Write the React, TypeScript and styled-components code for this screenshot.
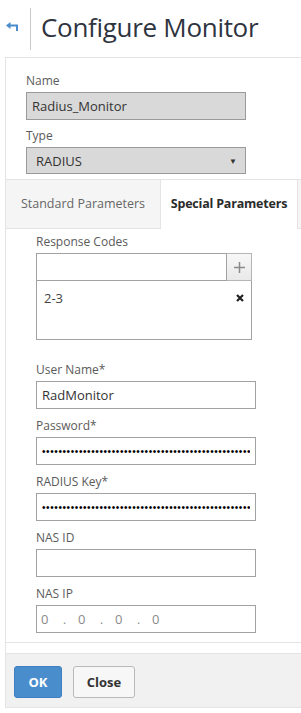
import styled, { createGlobalStyle } from 'styled-components';

const Global = createGlobalStyle`
  body { margin: 0; background: #fff; font-family: 'Open Sans', 'Noto Sans', sans-serif; color: #333; }
  * { box-sizing: border-box; }
`;

const Page = styled.div`width: 301px; height: 713px; overflow: hidden; background: #fff;`;

const Header = styled.header`
  display: flex; align-items: center; height: 57px; padding-left: 6px;
`;
const BackButton = styled.button`
  border: 0; background: none; padding: 0; width: 13px; height: 10px; display: flex; cursor: pointer;
  margin-top: -4px;
`;
const Divider = styled.div`width: 1px; height: 42px; background: #c8c8c8; margin: 0 10px 0 11px;`;
const Title = styled.h1`
  margin: 0; font-size: 26px; font-weight: 400; color: #2e3440; letter-spacing: -0.3px; margin-top: -4px;
`;

const Panel = styled.div`
  margin-left: 5px; border: 1px solid #e4e4e4; border-right: 0;
`;
const Top = styled.div`padding: 15px 0 5px 20px;`;
const Content = styled.div`padding: 5px 0 9px 30px; border-bottom: 1px solid #e4e4e4;`;

const Field = styled.div<{ $gap?: number }>`
  display: flex; flex-direction: column; margin-bottom: ${p => p.$gap ?? 9}px;
`;
const Label = styled.label`font-size: 12px; color: #5a5a5a; line-height: 16px; margin-bottom: 3px;`;

const TextBox = styled.input<{ $w?: number; $disabled?: boolean }>`
  width: ${p => p.$w ?? 220}px; height: 28px; border: 1px solid ${p => (p.$disabled ? '#9a9a9a' : '#a2a2a2')};
  background: ${p => (p.$disabled ? '#d9d9d9' : '#fff')};
  font-family: 'Open Sans', sans-serif; font-size: 13px; color: #333; padding: 0 5px; outline: none;
  border-radius: 0; display: block; margin: 0;
`;
const PassBox = styled(TextBox)`
  font-family: 'Liberation Sans', Arial, sans-serif; font-size: 10px; letter-spacing: 0.6px; color: #000;
`;

const Select = styled.div`
  width: 220px; height: 27px; border: 1px solid #9a9a9a; background: #d9d9d9;
  display: flex; align-items: center; justify-content: space-between; padding: 0 8px 0 9px;
  font-size: 13px; color: #333;
`;
const Caret = styled.span`font-size: 8px; color: #333;`;

const TabBar = styled.div`
  display: flex; height: 50px; background: #f5f5f5; border-top: 1px solid #e4e4e4;
  border-bottom: 1px solid #e4e4e4;
`;
const Tab = styled.div<{ $active?: boolean; $w: number }>`
  width: ${p => p.$w}px; display: flex; align-items: center; justify-content: center;
  font-size: 12.5px; font-weight: ${p => (p.$active ? 700 : 400)}; color: ${p => (p.$active ? '#2b2b2b' : '#666')};
  background: ${p => (p.$active ? '#fff' : 'transparent')};
  letter-spacing: ${p => (p.$active ? '-0.2px' : '0')};
  ${p => p.$active && 'border-left: 1px solid #e4e4e4; border-right: 1px solid #e4e4e4; margin-bottom: -1px;'}
  padding-bottom: 2px;
`;

const AddRow = styled.div`display: flex;`;
const PlusButton = styled.button`
  width: 25px; height: 28px; border: 1px solid #b5b5b5; border-left: 0;
  background: linear-gradient(#f7f7f7, #e9e9e9); display: flex; align-items: center; justify-content: center; padding: 0;
`;
const List = styled.div`
  width: 216px; height: 59px; border: 1px solid #a2a2a2; border-top: 0; padding: 8px 7px;
`;
const ListItem = styled.div`
  display: flex; justify-content: space-between; align-items: center; font-size: 13px; color: #444;
`;

const IpBox = styled.div`
  width: 220px; height: 28px; border: 1px solid #a2a2a2; display: flex; align-items: center; padding-left: 4px;
  font-size: 13px; color: #8a8a8a;
`;
const IpPart = styled.span`width: 22px;`;
const IpDot = styled.span`width: 15px; font-size: 12px;`;

const Footer = styled.div`
  margin-top: 10px; border-top: 1px solid #e4e4e4; background: #f1f1f1; height: 54px;
  display: flex; align-items: center; gap: 11px; padding-left: 8px; padding-top: 2px;
`;
const Button = styled.button<{ $primary?: boolean }>`
  height: 32px; padding: 0; border-radius: 3px;
  font-family: 'Open Sans', sans-serif; font-size: 13px; font-weight: 700;
  border: 1px solid ${p => (p.$primary ? '#3d7fc1' : '#b9b9b9')};
  background: ${p => (p.$primary ? '#4a8dcd' : '#f7f7f7')};
  color: ${p => (p.$primary ? '#fff' : '#333')};
  width: ${p => (p.$primary ? 48 : 62)}px;
`;

const dots = '•'.repeat(60);

export default function App() {
  return (
    <Page>
      <Global />
      <Header>
        <BackButton aria-label="Back">
          <svg width="13" height="10" viewBox="0 0 13 10">
            <path d="M4 3.5H11V9" fill="none" stroke="#4a8ccc" strokeWidth="2" />
            <path d="M0 3.5L4.5 0V7Z" fill="#4a8ccc" />
          </svg>
        </BackButton>
        <Divider />
        <Title>Configure Monitor</Title>
      </Header>
      <Panel>
        <Top>
          <Field $gap={8}>
            <Label>Name</Label>
            <TextBox $disabled readOnly value="Radius_Monitor" />
          </Field>
          <Field $gap={0}>
            <Label>Type</Label>
            <Select>
              RADIUS
              <Caret>▼</Caret>
            </Select>
          </Field>
        </Top>
        <TabBar>
          <Tab $w={154}>Standard Parameters</Tab>
          <Tab $w={138} $active>Special Parameters</Tab>
        </TabBar>
        <Content>
          <Field $gap={22}>
            <Label>Response Codes</Label>
            <AddRow>
              <TextBox $w={191} readOnly value="" />
              <PlusButton aria-label="Add">
                <svg width="11" height="11" viewBox="0 0 11 11">
                  <path d="M5.5 0V11M0 5.5H11" stroke="#8a8a8a" strokeWidth="1.5" />
                </svg>
              </PlusButton>
            </AddRow>
            <List>
              <ListItem>
                2-3
                <svg width="8" height="8" viewBox="0 0 8 8">
                  <path d="M1 1L7 7M7 1L1 7" stroke="#222" strokeWidth="2.2" />
                </svg>
              </ListItem>
            </List>
          </Field>
          <Field>
            <Label>User Name*</Label>
            <TextBox readOnly value="RadMonitor" />
          </Field>
          <Field>
            <Label>Password*</Label>
            <PassBox type="password" readOnly value={dots} />
          </Field>
          <Field>
            <Label>RADIUS Key*</Label>
            <PassBox type="password" readOnly value={dots} />
          </Field>
          <Field>
            <Label>NAS ID</Label>
            <TextBox readOnly value="" />
          </Field>
          <Field $gap={0}>
            <Label>NAS IP</Label>
            <IpBox>
              <IpPart>0</IpPart><IpDot>.</IpDot>
              <IpPart>0</IpPart><IpDot>.</IpDot>
              <IpPart>0</IpPart><IpDot>.</IpDot>
              <IpPart>0</IpPart>
            </IpBox>
          </Field>
        </Content>
        <Footer>
          <Button $primary>OK</Button>
          <Button>Close</Button>
        </Footer>
      </Panel>
    </Page>
  );
}
